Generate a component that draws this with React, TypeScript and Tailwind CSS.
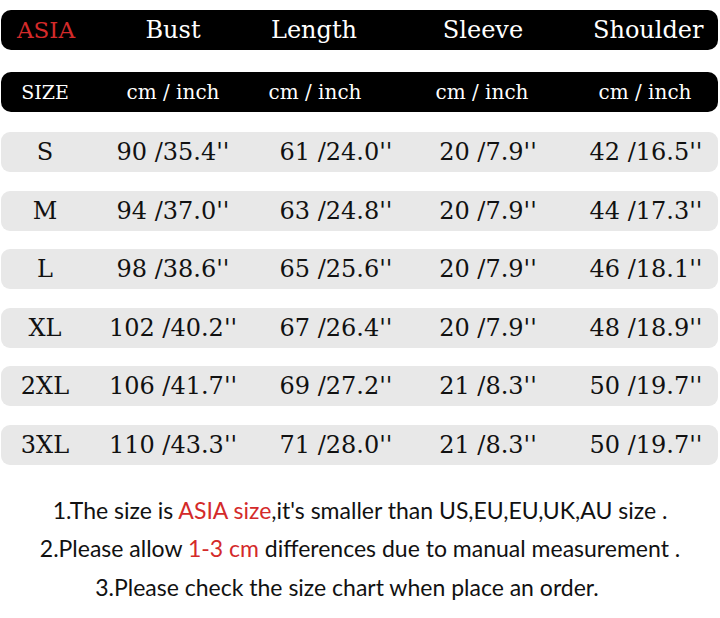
import React from "react";

const serif = { fontFamily: '"DejaVu Serif", "Liberation Serif", serif' };

const rows = [
  ["S", "90 /35.4''", "61 /24.0''", "20 /7.9''", "42 /16.5''"],
  ["M", "94 /37.0''", "63 /24.8''", "20 /7.9''", "44 /17.3''"],
  ["L", "98 /38.6''", "65 /25.6''", "20 /7.9''", "46 /18.1''"],
  ["XL", "102 /40.2''", "67 /26.4''", "20 /7.9''", "48 /18.9''"],
  ["2XL", "106 /41.7''", "69 /27.2''", "21 /8.3''", "50 /19.7''"],
  ["3XL", "110 /43.3''", "71 /28.0''", "21 /8.3''", "50 /19.7''"],
];

export default function App() {
  return (
    <div className="w-[720px] h-[618px] bg-white overflow-hidden">
      <div className="pl-[1px] pr-[2px] pt-[10px]" style={serif}>
        {/* title bar */}
        <div className="h-[40px] bg-black rounded-[10px] grid grid-cols-[90px_164px_118px_220px_106px] items-center text-white text-[24px] leading-none">
          <span className="text-center text-[#d42a2a] text-[23px]">ASIA</span>
          <span className="text-center">Bust</span>
          <span className="text-center">Length</span>
          <span className="text-center">Sleeve</span>
          <span className="text-center">Shoulder</span>
        </div>

        {/* unit bar */}
        <div className="mt-[22px] h-[40px] bg-black rounded-[10px] grid grid-cols-[88px_168px_116px_218px_108px] items-center text-white text-[20px] leading-none">
          <span className="text-center text-[19px]">SIZE</span>
          <span className="text-center">cm / inch</span>
          <span className="text-center">cm / inch</span>
          <span className="text-center">cm / inch</span>
          <span className="text-center">cm / inch</span>
        </div>

        {/* size rows */}
        <div className="mt-[20px] flex flex-col gap-[18.6px]">
          {rows.map((r) => (
            <div
              key={r[0]}
              className="h-[40px] bg-[#e8e8e8] rounded-[9px] grid grid-cols-[88px_168px_158px_146px_170px] items-center text-[#111] text-[24px] leading-none"
            >
              {r.map((c, i) => (
                <span key={i} className="text-center whitespace-nowrap">
                  {c}
                </span>
              ))}
            </div>
          ))}
        </div>
      </div>

      {/* notes */}
      <div
        className="mt-[26px] flex flex-col items-center text-[23px] leading-[38.5px] text-[#111]"
        style={{ fontFamily: 'Lato, "Open Sans", sans-serif' }}
      >
        <p>
          1.The size is <span className="text-[#d42a2a]">ASIA size</span>,it's smaller than US,EU,EU,UK,AU size .
        </p>
        <p>
          2.Please allow <span className="text-[#d42a2a]">1-3 cm</span> differences due to manual measurement .
        </p>
        <p className="pr-[26px]">3.Please check the size chart when place an order.</p>
      </div>
    </div>
  );
}
